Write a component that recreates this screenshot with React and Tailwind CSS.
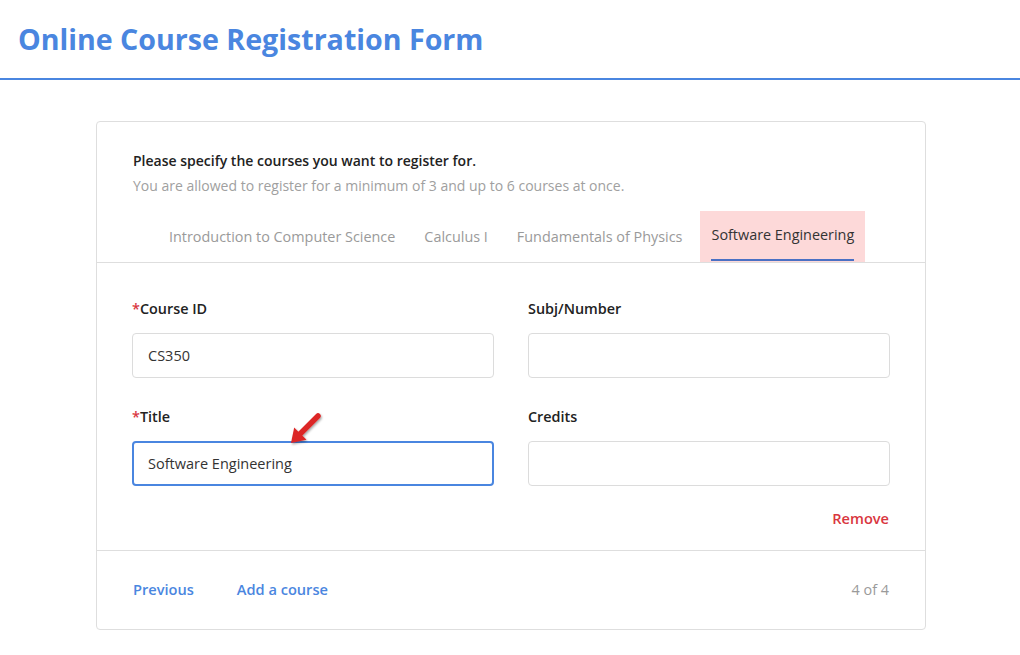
import React from "react";

const font = { fontFamily: '"Open Sans", "Noto Sans", sans-serif' };

function Field({ label, required, value, focused, children }) {
  return (
    <div className="flex flex-col">
      <label className="text-[14.4px] leading-[20px] font-semibold text-[#222] mb-[14px]">
        {required && <span className="text-[#d9363e]">*</span>}
        {label}
      </label>
      <div className="relative">
        <div
          className={
            focused
              ? "h-[45px] rounded-[4px] border-2 border-[#4a86e0] flex items-center pl-[14px] text-[14.5px] text-[#333]"
              : "h-[45px] rounded-[4px] border border-[#dcdcdc] flex items-center pl-[15px] text-[14.5px] text-[#333]"
          }
        >
          {value}
        </div>
        {children}
      </div>
    </div>
  );
}

export default function App() {
  const tabs = [
    "Introduction to Computer Science",
    "Calculus I",
    "Fundamentals of Physics",
  ];
  return (
    <div style={font} className="w-[1020px] h-[655px] bg-white overflow-hidden">
      <header className="h-[80px] border-b-2 border-[#4a86e0] flex items-center pl-[18px]">
        <h1 className="text-[28.6px] font-bold text-[#4a86e0] leading-none">
          Online Course Registration Form
        </h1>
      </header>

      <div className="ml-[96px] mt-[41px] w-[830px] border border-[#dedede] rounded-[4px]">
        <div className="pt-[29px] pl-[36px]">
          <p className="text-[14px] leading-[20px] font-semibold text-[#222]">
            Please specify the courses you want to register for.
          </p>
          <p className="text-[14px] leading-[20px] text-[#a0a0a0] mt-[5px]">
            You are allowed to register for a minimum of 3 and up to 6 courses at once.
          </p>
        </div>
        <div className="flex gap-[7px] pl-[61px] mt-[15px] border-b border-[#dedede]">
          {tabs.map((t) => (
            <div key={t} className="h-[51px] px-[11px] flex items-center text-[14.4px] text-[#9a9a9a]">
              {t}
            </div>
          ))}
          <div className="h-[51px] px-[11px] bg-[#fdd9d9] flex flex-col">
            <div className="flex-1 flex items-center text-[14.4px] text-[#333]">Software Engineering</div>
            <div className="h-[2px] bg-[#4a70c4] mb-[1px]"></div>
          </div>
        </div>

        <div className="px-[35px] pt-[36px] pb-[22px]">
          <div className="grid grid-cols-2 gap-x-[34px] gap-y-[29px]">
            <Field label="Course ID" required value="CS350" />
            <Field label="Subj/Number" />
            <Field label="Title" required value="Software Engineering" focused>
              <svg
                className="absolute left-[155px] top-[-30px] overflow-visible"
                width="36"
                height="36"
                viewBox="0 0 36 36"
              >
                <defs>
                  <filter id="sh" x="-50%" y="-50%" width="200%" height="200%">
                    <feDropShadow dx="1" dy="1.5" stdDeviation="1.2" floodColor="#000" floodOpacity="0.35" />
                  </filter>
                </defs>
                <g filter="url(#sh)">
                  <line x1="31" y1="5" x2="13" y2="23" stroke="#dc2626" strokeWidth="5.5" strokeLinecap="round" />
                  <polygon points="4,32 19.5,28.8 7.2,16.5" fill="#dc2626" />
                </g>
              </svg>
            </Field>
            <Field label="Credits" />
          </div>
          <div className="flex justify-end mt-[22px] pr-[1px]">
            <span className="text-[14.6px] leading-[20px] font-semibold text-[#d9363e]">Remove</span>
          </div>
        </div>

        <div className="border-t border-[#dedede] h-[79px] flex items-center pl-[36px] pr-[36px]">
          <span className="text-[14.6px] font-semibold text-[#4a86e0]">Previous</span>
          <span className="text-[14.6px] font-semibold text-[#4a86e0] ml-[43px]">Add a course</span>
          <span className="ml-auto text-[14.4px] text-[#9a9a9a]">4 of 4</span>
        </div>
      </div>
    </div>
  );
}
